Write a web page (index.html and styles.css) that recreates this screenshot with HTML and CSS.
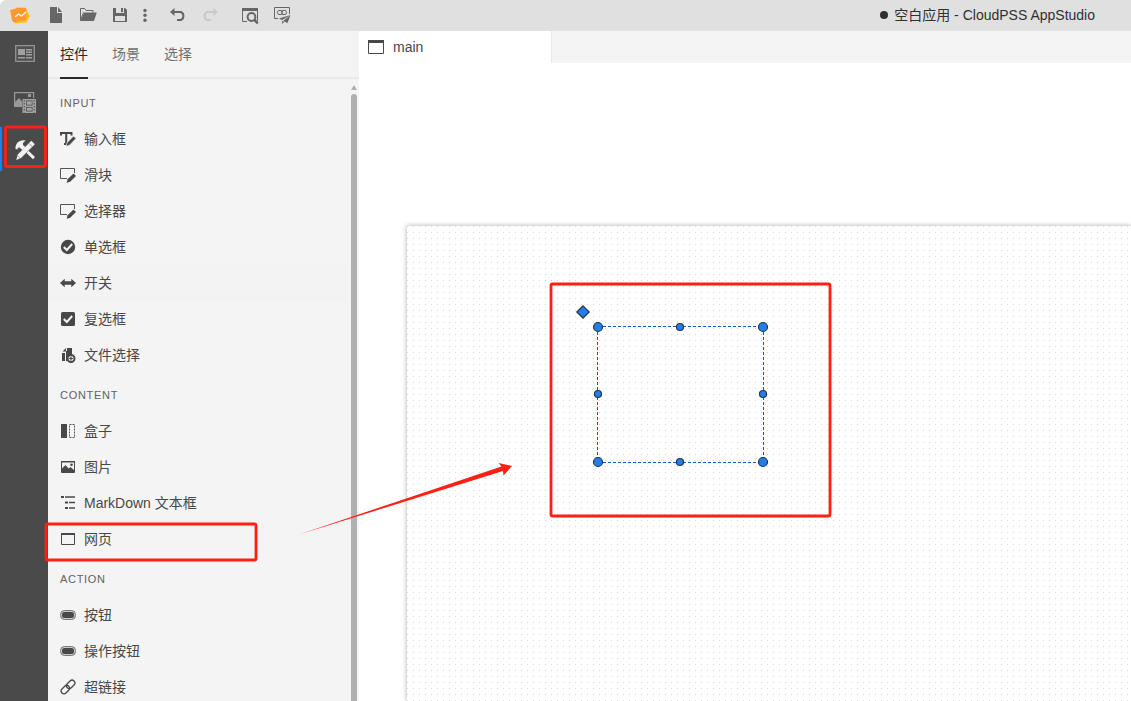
FILE: index.html
```
<!DOCTYPE html>
<html lang="zh-CN">
<head>
<meta charset="utf-8">
<title>空白应用 - CloudPSS AppStudio</title>
<link rel="stylesheet" href="styles.css">
</head>
<body>
<div class="app">
  <header class="topbar">
    <svg class="logo" viewBox="0 0 20 20"><path d="M3 4l12-1.500 4 7-2 8-12 1z" fill="#ffc21f"/><path d="M0 5l5-1 2-1.500 9 .5 1 3-1 9-12 2.500-2-2z" fill="#ff982d"/><path d="M16 5l4 6-4 5z" fill="#ffb712"/><path d="M5 12l3.500-3 3 2 4.500-4" fill="none" stroke="#fff" stroke-width="1.300"/></svg>
    <svg class="tool new" viewBox="0 0 20 20"><path d="M4 2h7v6h5v10H4z"/><path d="M12 2l4 5h-4z"/></svg>
    <svg class="tool" viewBox="0 0 20 20"><path d="M2.500 15.500v-12h4l1.500 2h7v2M2.500 15.500l3-8" fill="none" stroke="#666"/><path d="M6 7.500h12.800L16 16H2.500z"/></svg>
    <svg class="tool" viewBox="0 0 20 20"><path fill-rule="evenodd" d="M3 3h12l2 2v12H3zM6 3v5h8V3h-1v4h-2V3zM5 11v5h10v-5z"/></svg>
    <svg class="tool more" viewBox="0 0 20 20"><circle cx="10" cy="5.500" r="1.700"/><circle cx="10" cy="10.300" r="1.700"/><circle cx="10" cy="15.200" r="1.700"/></svg>
    <svg class="tool undo" viewBox="0 0 20 20"><path d="M5 7h8a4.500 4.500 0 0 1 0 8H9" fill="none" stroke="#666" stroke-width="2"/><path d="M2 7l4.500-4v8z"/></svg>
    <svg class="tool redo" viewBox="0 0 20 20"><path d="M15 7H7a4.500 4.500 0 0 0 0 8h4" fill="none" stroke="#c9c9c9" stroke-width="2"/><path d="M18 7l-4.500-4v8z" fill="#c9c9c9"/></svg>
    <svg class="tool preview" viewBox="0 0 20 20"><path d="M2 3h16v3H2z"/><path d="M2.500 5v11.500H7M17.500 5v11" fill="none" stroke="#666"/><circle cx="11.500" cy="12" r="3.900" fill="none" stroke="#666" stroke-width="2"/><path d="M14.300 14.800l3.500 3.500" stroke="#666" stroke-width="2.500"/></svg>
    <svg class="tool share" viewBox="0 0 20 20"><path d="M6 13.500H2.500v-11h15V9" fill="none" stroke="#666"/><ellipse cx="8" cy="7.500" rx="2.600" ry="2.200" fill="none" stroke="#666"/><ellipse cx="12" cy="7.500" rx="2.600" ry="2.200" fill="none" stroke="#666"/><path d="M18.500 10L7 13.500l3 1.500zM18.500 10l-7.500 6 4.500 2zM10 16v3l2-2z"/></svg>
    <div class="title"><span class="dirty"></span>空白应用 - CloudPSS AppStudio</div>
  </header>
  <main class="workspace">
    <nav class="rail">
      <svg class="rail-icon" viewBox="0 0 24 24"><path d="M2.700 3.700h18.600v15.600H2.700z" fill="#505050" stroke="#949494" stroke-width="1.300"/><path d="M5 7h7v6H5zM13 7h6v1.500h-6zM13 9.500h6V11h-6zM13 12h6v1.500h-6zM5 15h7v1.500H5zM13 15h6v1.500h-6z" fill="#a0a0a0"/></svg>
      <svg class="rail-icon" viewBox="0 0 24 24"><path d="M1.600 15V1.600h19V7" fill="none" stroke="#999" stroke-width="1.200"/><path d="M1 16v-4l5-5 3 3.500V16zM15 3h3v3h-3z" fill="#999"/><path fill-rule="evenodd" d="M9.500 8h13.500v14H9.500zM13 9.500v5h6.500v-5zM13 16v4.500h6.500V16z" fill="#a4a4a4"/><path d="M13.700 10.200h5.100v3.600h-5.100zM13.700 16.700h5.100v3.100h-5.100z" fill="#a4a4a4"/><path d="M11.300 9v12.500M21.300 9v12.500" stroke="#555" stroke-width="1.200" stroke-dasharray="1.500 1.500"/></svg>
      <svg class="rail-icon active" viewBox="0 0 24 24"><path d="M2.500 11C2 6 6 1.500 12.500 2.500L10 5v2l2.300 2-3 3-2.500-2.300c-1.500-.5-2.200.1-2.300 1.800zM15.500 12.700L22 19l-2 2.200-6.500-6.300z" fill="#f2f2f2"/><path d="M18.300 2.800l3.500 3.500L8 20l-4.800 2 1.600-5.500z" fill="#f2f2f2"/><path d="M5.200 18.300l1.500 1.500M16 5.500l3 3" stroke="#777" stroke-width=".8"/></svg>
    </nav>
    <aside class="panel">
      <div class="tabs"><span class="tab selected">控件</span><span class="tab">场景</span><span class="tab">选择</span></div>
      <div class="list">
        <h2>INPUT</h2>
        <div class="item"><svg viewBox="0 0 16 16"><path d="M1 4.500V2h10.500v2.500M6.200 2v11M4 13h4.500" fill="none" stroke="#484848" stroke-width="2"/><path d="M13.500 5l2.500 2.500-6.500 6.700L6 15.500l1-3.800z" stroke="#f4f4f4" stroke-width=".7"/></svg>输入框</div>
        <div class="item"><svg viewBox="0 0 16 16"><path d="M7 11.500H.5v-10h14V6" fill="none" stroke="#555"/><path d="M13.500 6.500L16 9l-5.800 5.800-3.600 1 1-3.600z"/></svg>滑块</div>
        <div class="item"><svg viewBox="0 0 16 16"><path d="M7 11.500H.5v-10h14V6" fill="none" stroke="#555"/><path d="M13.500 6.500L16 9l-5.800 5.800-3.600 1 1-3.600z"/></svg>选择器</div>
        <div class="item"><svg viewBox="0 0 16 16"><circle cx="8" cy="8" r="7.200"/><path d="M3.800 8l3 3 5.400-6" fill="none" stroke="#f4f4f4" stroke-width="2"/></svg>单选框</div>
        <div class="item hovered"><svg viewBox="0 0 16 16"><path d="M0 8l4.700-4.300v2.600h6.600V3.700L16 8l-4.700 4.300V9.700H4.700v2.600z"/></svg>开关</div>
        <div class="item"><svg viewBox="0 0 16 16"><rect x="1" y="1" width="14" height="14" rx="1.500"/><path d="M3.800 8l3 3 5.400-6" fill="none" stroke="#f4f4f4" stroke-width="2"/></svg>复选框</div>
        <div class="item"><svg viewBox="0 0 16 16"><path d="M7 1h5v7H9l-2 3v3H6V4h1zM2.500 4.500L6 1v3.500zM2 6h3v8H2z"/><circle cx="11" cy="11.500" r="3.500" fill="#f4f4f4" stroke="#484848" stroke-width="2"/><path d="M9 11.500h4M11 9.500v4" stroke="#484848" stroke-width="1.200"/></svg>文件选择</div>
        <h2>CONTENT</h2>
        <div class="item"><svg viewBox="0 0 16 16"><path d="M1 1h6v14H1z"/><path d="M9.500 1.500h5v13h-5z" fill="none" stroke="#555" stroke-dasharray="2 1"/></svg>盒子</div>
        <div class="item"><svg viewBox="0 0 16 16"><path d="M1.500 2.500h13v11h-13z" fill="none" stroke="#484848"/><path d="M1 2h14v1.500H1zM2 13V9.500L5.500 6l3 3.500 2-1.500L14 11v2z"/><circle cx="11.500" cy="5.800" r="1.300"/></svg>图片</div>
        <div class="item"><svg viewBox="0 0 16 16"><path d="M1 1h3v2H1zM5 1.200h10v1.600H5zM5 6.500h3v2H5zM9 6.700h6v1.600H9zM5 12h3v2H5zM9 12.200h6v1.600H9z"/></svg>MarkDown 文本框</div>
        <div class="item"><svg viewBox="0 0 16 16"><path d="M1.500 2.500h13v11h-13z" fill="none" stroke="#484848"/><path d="M1 2h14v2H1z"/></svg>网页</div>
        <h2>ACTION</h2>
        <div class="item"><svg viewBox="0 0 16 16"><rect x=".5" y="3.500" width="15" height="9" rx="4" fill="#c9c9c9" stroke="#777"/><rect x="2" y="5" width="12" height="6" rx="2.500"/></svg>按钮</div>
        <div class="item"><svg viewBox="0 0 16 16"><rect x=".5" y="3.500" width="15" height="9" rx="4" fill="#c9c9c9" stroke="#777"/><rect x="2" y="5" width="12" height="6" rx="2.500"/></svg>操作按钮</div>
        <div class="item"><svg viewBox="0 0 16 16"><g fill="none" stroke="#484848" stroke-width="1.300" transform="rotate(-45 8 8)"><rect x="-.5" y="5.200" width="9.500" height="5.600" rx="2.800"/><rect x="7" y="5.200" width="9.500" height="5.600" rx="2.800"/></g></svg>超链接</div>
      </div>
      <div class="scrollbar"><span class="scroll-up"></span><span class="thumb"></span></div>
    </aside>
    <section class="editor">
      <div class="doc-tabs"><div class="doc-tab"><svg viewBox="0 0 16 14"><path d="M.5.500h15v13H.5z" fill="none" stroke="#484848"/><path d="M0 0h16v3H0z" fill="#484848"/></svg>main</div></div>
      <div class="canvas"><div class="sheet"></div></div>
    </section>
  </main>
  <svg class="overlay" viewBox="0 0 1131 701">
    <g stroke="#125bb5" stroke-dasharray="3 2" fill="none"><path d="M598 326.500h165M598 462.500h165M597.500 327v135M763.500 327v135"/></g>
    <g fill="#237eed" stroke="#28343f" stroke-width="1.200">
      <circle cx="598" cy="327" r="4.500"/><circle cx="763" cy="327" r="4.500"/><circle cx="598" cy="462" r="4.500"/><circle cx="763" cy="462" r="4.500"/>
      <circle cx="680" cy="327" r="3.500"/><circle cx="598" cy="394" r="3.500"/><circle cx="763" cy="394" r="3.500"/><circle cx="680" cy="462" r="3.500"/>
      <path d="M583 305.800l6.200 6.200-6.200 6.200-6.200-6.200z"/>
    </g>
    <g fill="none" stroke="#ff2013" stroke-width="2.800"><rect x="5.500" y="127" width="40" height="39.500" rx="1.500"/><rect x="46" y="524" width="210" height="36" rx="1.500"/><rect x="551" y="284" width="279" height="232" rx="1.500"/></g>
    <path d="M299 534.500L501.500 466.500l-3-3.500 13.500 3-8.500 9.500-.5-4.500z" fill="#ff2013"/>
  </svg>
</div>
</body>
</html>
```
FILE: styles.css
```
* { box-sizing: border-box; }
body { margin: 0; overflow: hidden; font: 14px/20px "Liberation Sans", "Noto Sans CJK SC", sans-serif; color: #484848; }
svg { display: block; flex: none; }
.app { position: relative; width: 1131px; height: 701px; display: flex; flex-direction: column; background: #fff; overflow: hidden; }
.topbar { height: 31px; flex: none; display: flex; align-items: center; gap: 12px; padding: 0 36px 1px 10px; background: #e0e0e0; border-top-left-radius: 6px; }
.logo { width: 20px; height: 20px; }
.tool { width: 20px; height: 20px; fill: #666; }
.new { margin-left: 4px; }
.more { margin-left: -7px; }
.undo { margin-left: 1px; }
.preview { margin-left: 8px; }
.title { margin-left: auto; display: flex; align-items: center; color: #303030; white-space: pre; }
.dirty { width: 8px; height: 8px; border-radius: 50%; background: #303030; margin-right: 6px; }
.workspace { flex: 1; min-height: 0; display: flex; }
.rail { width: 48px; flex: none; background: #4a4a4a; display: flex; flex-direction: column; }
.rail-icon { width: 48px; height: 48px; padding: 11px 11px 13px 13px; }
.rail-icon:nth-child(2) { padding-top: 12px; padding-bottom: 12px; }
.active { border-left: 2px solid #237eed; height: 44px; padding: 11px 11px 9px 11px; }
.panel { width: 311px; flex: none; background: #f4f4f4; display: grid; grid-template: 48px 1fr / 1fr 10px; overflow: hidden; }
.tabs { grid-column: 1 / 3; display: flex; gap: 24px; padding-left: 12px; border-bottom: 2px solid #e9e9e9; }
.tab { height: 48px; line-height: 46px; color: #707070; }
.selected { color: #292929; border-bottom: 2px solid #292929; }
.list { padding-top: 2px; min-height: 0; overflow: hidden; }
.list h2 { margin: 0; height: 40px; padding: 4px 0 0 12px; font-size: 11px; line-height: 36px; font-weight: 400; letter-spacing: .7px; color: #626262; }
.item { height: 36px; padding-left: 12px; display: flex; align-items: center; gap: 8px; }
.item svg { width: 16px; height: 16px; fill: #484848; }
.hovered { background: #f3f3f3; }
.scrollbar { display: flex; flex-direction: column; align-items: center; padding: 6px 0 0; }
.scroll-up { border: 3px solid transparent; border-top: 0; border-bottom: 5px solid #b0b0b0; }
.thumb { flex: 1; width: 6px; margin-top: 4px; background: #b0b0b0; border-radius: 3px 3px 0 0; }
.editor { flex: 1; min-width: 0; display: flex; flex-direction: column; background: #fff; }
.doc-tabs { height: 32px; flex: none; display: flex; background: #f4f4f4; }
.doc-tab { width: 193px; border-right: 1px solid #e9e9e9; background: #fff; display: flex; align-items: center; gap: 9px; padding-left: 9px; }
.doc-tab svg { width: 16px; height: 14px; }
.canvas { flex: 1; padding: 163px 0 0 48px; overflow: hidden; display: flex; }
.sheet { flex: 1; background: conic-gradient(from 270deg at 1px 1px, #d8d8d8 90deg, #fff 0) 0 0 / 6px 6px; box-shadow: 0 0 5px #aaa; }
.overlay { position: absolute; left: 0; top: 0; width: 1131px; height: 701px; pointer-events: none; }
```
